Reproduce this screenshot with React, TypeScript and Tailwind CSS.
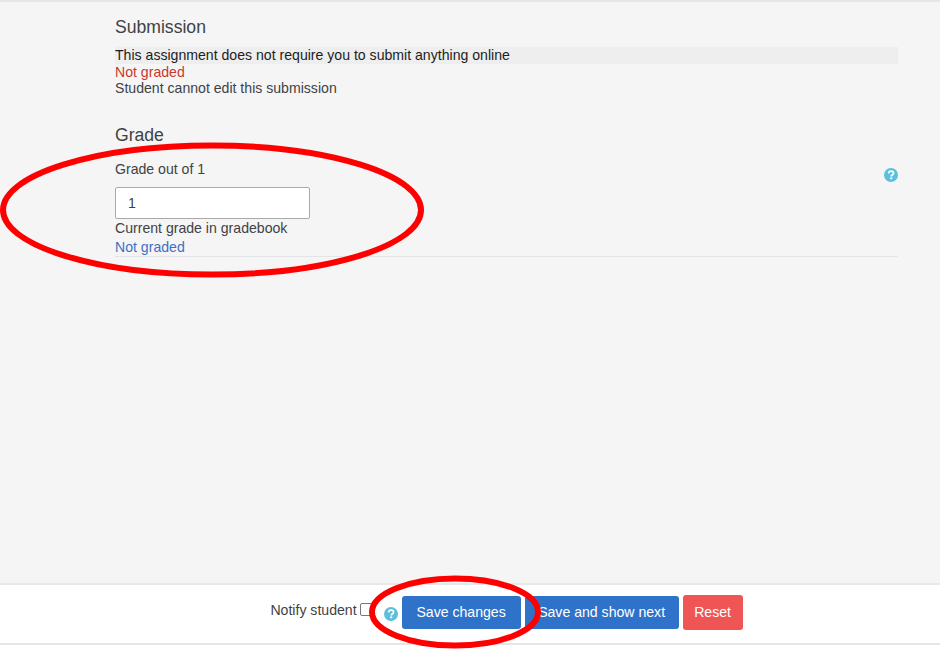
// App.tsx
const HelpIcon = ({ className }: { className: string }) => (
  <svg viewBox="0 0 14 14" className={className}>
    <circle cx="7" cy="7" r="7" fill="#5bc0de" />
    <path d="M4.6 5.4C4.7 4 5.7 3.2 7.1 3.2c1.4 0 2.4.8 2.4 2 0 1.9-2.3 1.8-2.3 3.3" fill="none" stroke="#fff" strokeWidth="1.7" />
    <rect x="6.2" y="9.4" width="2" height="1.8" fill="#fff" />
  </svg>
);

const App = () => {
  return (
    <div className="relative flex h-[649px] w-[940px] flex-col overflow-hidden bg-white font-['Liberation_Sans',Arial,sans-serif] text-[14.1px] leading-[16.5px] text-[#3f4244]">
      {/* Main area */}
      <div className="h-[585px] border-t-2 border-b-2 border-t-[#e6e6e6] border-b-[#e8e8e8] bg-[#f5f5f5] pl-[115px] pr-[42px] pt-[14px]">
        <h3 className="text-[17.6px] leading-[22px]">Submission</h3>
        <div className="mt-[9px] bg-[#eeeeee] text-[#1d1d1d]">This assignment does not require you to submit anything online</div>
        <div className="text-[#c9392e]">Not graded</div>
        <div>Student cannot edit this submission</div>

        <h3 className="mt-[27px] text-[17.6px] leading-[22px]">Grade</h3>
        <div className="border-b border-[#e3e5e8]">
          <div className="mt-[15px] flex justify-between">
            <span>Grade out of 1</span>
            <HelpIcon className="mt-[7px] h-[14px] w-[14px]" />
          </div>
          <input
            readOnly
            value="1"
            className="mt-[5px] block h-[32px] w-[195px] rounded-[2px] border border-[#a9a9a9] bg-white px-3 text-[14.1px]"
          />
          <div className="mt-[1px]">Current grade in gradebook</div>
          <div className="mt-[3px] text-[#3f6fc4]">Not graded</div>
        </div>
      </div>

      {/* Footer */}
      <div className="flex h-[58px] items-center justify-center bg-white pb-[4px] pl-[73px]">
        <span className="mb-[4px]">Notify student</span>
        <span className="mb-[6px] ml-[3px] h-[13px] w-[13px] rounded-[2px] border border-[#767676] bg-white" />
        <HelpIcon className="ml-[11px] mt-[4px] h-[14px] w-[14px]" />
        <button className="ml-[4px] h-[33px] w-[119px] rounded-[3px] bg-[#2f72c9] text-white">Save changes</button>
        <button className="ml-[4px] h-[33px] w-[154px] rounded-[3px] bg-[#2f72c9] text-white">Save and show next</button>
        <button className="ml-[4px] h-[35px] w-[60px] rounded-[3px] bg-[#f05556] text-white">Reset</button>
      </div>
      <div className="h-[2px] bg-[#e6e6e6]" />

      {/* Red annotation ellipses */}
      <svg className="pointer-events-none absolute left-0 top-0" width="940" height="649" fill="none" stroke="#ff0000" strokeWidth="6">
        <ellipse cx="212" cy="210" rx="209" ry="64.5" />
        <ellipse cx="455" cy="612" rx="83" ry="33.5" />
      </svg>
    </div>
  );
};

export default App;
